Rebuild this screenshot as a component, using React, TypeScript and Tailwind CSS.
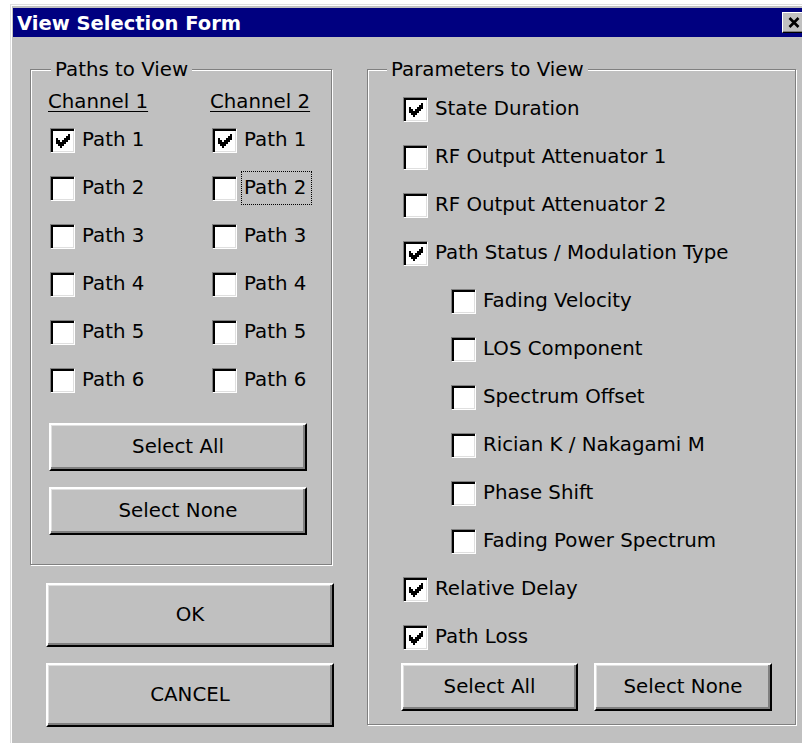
import React from 'react';

type ParamItem = { label: string; checked?: boolean; indent?: boolean };

const PARAMS: ParamItem[] = [
  { label: 'State Duration', checked: true },
  { label: 'RF Output Attenuator 1' },
  { label: 'RF Output Attenuator 2' },
  { label: 'Path Status / Modulation Type', checked: true },
  { label: 'Fading Velocity', indent: true },
  { label: 'LOS Component', indent: true },
  { label: 'Spectrum Offset', indent: true },
  { label: 'Rician K / Nakagami M', indent: true },
  { label: 'Phase Shift', indent: true },
  { label: 'Fading Power Spectrum', indent: true },
  { label: 'Relative Delay', checked: true },
  { label: 'Path Loss', checked: true },
];

const CHANNELS = [
  { name: 'Channel 1', checked: [true, false, false, false, false, false], focus: -1 },
  { name: 'Channel 2', checked: [true, false, false, false, false, false], focus: 1 },
];

// classic 7x7 check glyph, drawn on a 2px grid
const CheckMark = () => (
  <svg width="14" height="14" viewBox="0 0 7 7" shapeRendering="crispEdges">
    <path
      fill="#000"
      d="M6 0h1v1h-1z M5 1h2v1h-2z M0 2h1v1h-1z M4 2h3v1h-3z M0 3h2v1h-2z M3 3h3v1h-3z M0 4h5v1h-5z M1 5h3v1h-3z M2 6h1v1h-1z"
    />
  </svg>
);

const CheckBox = ({ checked }: { checked?: boolean }) => (
  <span className="flex h-[25px] w-[25px] shrink-0 items-center justify-center border border-t-[#808080] border-l-[#808080] border-r-white border-b-white bg-white pl-[1px] pt-[1px] shadow-[inset_2px_2px_0_#000,inset_-1px_-1px_0_#dfdfdf]">
    {checked && <CheckMark />}
  </span>
);

const CheckRow = ({ label, checked, focused }: { label: string; checked?: boolean; focused?: boolean }) => (
  <div className="flex h-[48px] items-center">
    <CheckBox checked={checked} />
    <span
      className={`ml-[4px] whitespace-nowrap border py-[4px] pl-[2px] pr-[5px] ${
        focused ? 'border-dotted border-black' : 'border-transparent'
      }`}
    >
      {label}
    </span>
  </div>
);

const Button = ({ label, className }: { label: string; className: string }) => (
  <button
    className={`flex shrink-0 items-center justify-center border-2 border-t-white border-l-white border-r-black border-b-black bg-[#c0c0c0] text-black shadow-[inset_-2px_-2px_0_#808080,inset_1px_1px_0_#dfdfdf] ${className}`}
  >
    {label}
  </button>
);

const GroupBox = ({
  title,
  titleClass,
  className,
  children,
}: {
  title: string;
  titleClass: string;
  className: string;
  children: React.ReactNode;
}) => (
  <div className={`relative shrink-0 border border-[#808080] shadow-[inset_1px_1px_0_#fff,1px_1px_0_#fff] ${className}`}>
    <span className={`absolute top-[-12px] bg-[#c0c0c0] px-[4px] ${titleClass}`}>{title}</span>
    {children}
  </div>
);

const App: React.FC = () => {
  return (
    <div className="h-[743px] w-[802px] overflow-hidden bg-white font-['DejaVu_Sans',sans-serif] text-[19.8px] leading-[24px] text-black">
      <div className="ml-[10px] mt-[4px] h-[760px] w-[806px] shrink-0 border-l border-t border-[#dfdfdf] bg-[#c0c0c0] pl-[2px] pr-[2px] pt-[3px] shadow-[inset_1px_1px_0_#fff]">
        {/* title bar */}
        <div className="flex h-[29px] items-center justify-between bg-[#000080] pl-[4px] pr-[2px]">
          <span className="pt-[2px] text-[19.5px] font-bold text-white">View Selection Form</span>
          <span className="flex h-[21px] w-[30px] shrink-0 items-center justify-start border border-t-white border-l-white border-r-black border-b-black bg-[#c0c0c0] pl-[5px] shadow-[inset_-1px_-1px_0_#808080]">
            <svg width="12" height="11" viewBox="0 0 12 11">
              <path d="M1.5 1 L10.5 10 M10.5 1 L1.5 10" stroke="#000" strokeWidth="2.6" />
            </svg>
          </span>
        </div>

        <div className="flex pl-[17px] pt-[32px]">
          {/* left column: paths + OK/CANCEL */}
          <div className="flex w-[304px] shrink-0 flex-col">
            <GroupBox title="Paths to View" titleClass="left-[20px]" className="h-[496px] w-[302px]">
              <div className="flex pl-[17px] pt-[18px]">
                {CHANNELS.map((ch) => (
                  <div key={ch.name} className="flex w-[162px] shrink-0 flex-col">
                    <div className="flex h-[28px] items-center underline underline-offset-[3px]">{ch.name}</div>
                    <div className="ml-[2px] flex flex-col">
                      {ch.checked.map((c, i) => (
                        <CheckRow key={i} label={`Path ${i + 1}`} checked={c} focused={ch.focus === i} />
                      ))}
                    </div>
                  </div>
                ))}
              </div>
              <div className="ml-[18px] mt-[19px] flex flex-col gap-[16px]">
                <Button label="Select All" className="h-[48px] w-[258px]" />
                <Button label="Select None" className="h-[48px] w-[258px]" />
              </div>
            </GroupBox>
            <div className="ml-[16px] mt-[18px] flex flex-col gap-[16px]">
              <Button label="OK" className="h-[64px] w-[288px]" />
              <Button label="CANCEL" className="h-[64px] w-[288px]" />
            </div>
          </div>

          {/* right column: parameters */}
          <GroupBox title="Parameters to View" titleClass="left-[19px]" className="ml-[33px] h-[656px] w-[429px]">
            <div className="flex flex-col pl-[35px] pt-[15px]">
              {PARAMS.map((p) => (
                <div key={p.label} className={p.indent ? 'ml-[48px]' : ''}>
                  <CheckRow label={p.label} checked={p.checked} />
                </div>
              ))}
            </div>
            <div className="ml-[33px] mt-[2px] flex gap-[16px]">
              <Button label="Select All" className="h-[48px] w-[177px]" />
              <Button label="Select None" className="h-[48px] w-[178px]" />
            </div>
          </GroupBox>
        </div>
      </div>
    </div>
  );
};

export default App;
